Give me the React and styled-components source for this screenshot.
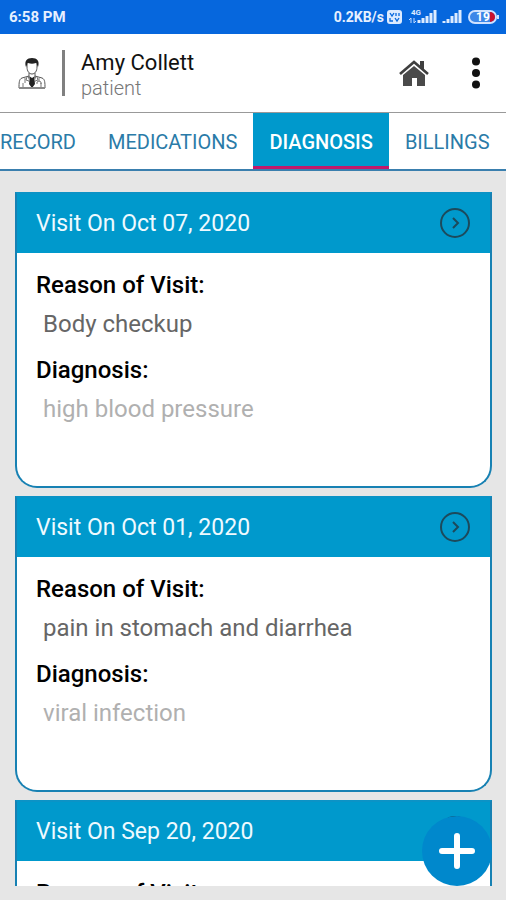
import styled, { createGlobalStyle } from "styled-components"

const visits = [
    { id: 1, date: "Oct 07, 2020", reason: "Body checkup", diagnosis: "high blood pressure" },
    { id: 2, date: "Oct 01, 2020", reason: "pain in stomach and diarrhea", diagnosis: "viral infection" },
    { id: 3, date: "Sep 20, 2020" },
]

const tabs = ["RECORD", "MEDICATIONS", "DIAGNOSIS", "BILLINGS"]

const StatusIcons = () => (
    <svg width="114" height="18" viewBox="0 0 114 18" aria-hidden="true">
        <rect x="1" y="2" width="15" height="14" rx="3" fill="#dcebff" />
        <path d="M4 5l2 3 2-3M10 5v3M13 5v3M4 10v3h3M9 10l2 3 2-3" stroke="#0667dd" strokeWidth="1.3" fill="none" />
        <text x="25" y="7" fontSize="8" fontWeight="700" fill="#dcebff">4G</text>
        <path d="M25 10v5M23 12l2-2M28 15v-5M30 13l-2 2" stroke="#c4dcff" strokeWidth="1" fill="none" />
        <path d="M33 15v-3M37 15v-5M41 15V8M45 15V5M49 15V2" stroke="#dcebff" strokeWidth="3" />
        <path d="M58 15v-2M62 15v-4M66 15V8M70 15V5M74 15V2" stroke="#dcebff" strokeWidth="3" />
        <rect x="83" y="3" width="27" height="12" rx="6" fill="#3c87e8" stroke="#cfe2ff" strokeWidth="2" />
        <path d="M104 4a5 5 0 0 1 0 10z" fill="#c8102e" />
        <path d="M112 7v4" stroke="#cfe2ff" strokeWidth="2" />
        <text x="90" y="13" fontSize="12" fontWeight="700" fill="#fff">19</text>
    </svg>
)

const DoctorIcon = () => (
    <svg width="30" height="34" viewBox="0 0 30 34" fill="none" stroke="#555" aria-hidden="true">
        <path d="M10 8v3c0 4 2 7 5 7s5-3 5-7V8" strokeWidth="1" fill="#fff" />
        <path d="M9 11c-2-6 1-9 6-9s8 3 6 9c-1-2-1-3-2-4-3 1-5 1-8 0-1 1-1 2-2 4z" fill="#222" stroke="none" />
        <path d="M12 17v3l-7 2c-3 1-3 5-3 10h26c0-5 0-9-3-10l-7-2v-3" strokeWidth="1" />
        <path d="M11 20l4 11 4-11M10 21l-1 3 3 1 3 6M20 21l1 3-3 1-3 6M6 27v5M24 27v5" strokeWidth="0.8" />
        <path d="M12 20l3 2 3-2-1 4 1 4-3 4-3-4 1-4z" fill="#222" stroke="none" />
        <path d="M22 22v3m-2 3v-2l2-1 2 1v2M8 22v5" strokeWidth="0.8" />
        <path d="M2 32h26" strokeWidth="2" stroke="#888" />
    </svg>
)

const HomeIcon = () => (
    <svg width="30" height="26" viewBox="0 0 30 26" aria-hidden="true">
        <path d="M15 6l11 9v11h-8v-8h-5v8H4V15z" fill="#4a4a4a" />
        <path d="M1 14L15 2l14 12" fill="none" stroke="#3f3f3f" strokeWidth="2.6" />
        <path d="M21 1h4v9l-4-4z" fill="#3f3f3f" />
    </svg>
)

const MoreIcon = () => (
    <svg width="10" height="32" viewBox="0 0 10 32" fill="#111" aria-hidden="true">
        <circle cx="5" cy="4.5" r="4" />
        <circle cx="5" cy="16" r="4" />
        <circle cx="5" cy="27.5" r="4" />
    </svg>
)

const Visit = ({ visit }) => {
    return (
        <Card>
            <CardHeader>
                <CardTitle>Visit On {visit.date}</CardTitle>
                <OpenButton type="button" aria-label={`Open visit on ${visit.date}`}>
                    <svg width="32" height="32" viewBox="0 0 32 32" fill="none" stroke="#1c4a5c" strokeWidth="2">
                        <circle cx="16" cy="15" r="14" />
                        <path d="M14 10l5 5-5 5" />
                    </svg>
                </OpenButton>
            </CardHeader>
            <Details>
                <Label>Reason of Visit:</Label>
                <Value>{visit.reason}</Value>
                <Label>Diagnosis:</Label>
                <Value $muted>{visit.diagnosis}</Value>
            </Details>
        </Card>
    )
}

const App = () => {
    return (
        <Screen>
            <GlobalStyle />
            <StatusBar>
                <span>6:58 PM</span>
                <StatusRight>
                    <span>0.2KB/s</span>
                    <StatusIcons />
                </StatusRight>
            </StatusBar>
            <Header>
                <DoctorIcon />
                <Divider />
                <Person>
                    <Name>Amy Collett</Name>
                    <Role>patient</Role>
                </Person>
                <Actions>
                    <IconButton type="button" aria-label="Home"><HomeIcon /></IconButton>
                    <IconButton type="button" aria-label="More options"><MoreIcon /></IconButton>
                </Actions>
            </Header>
            <Tabs>
                {tabs.map(tab => (
                    <Tab key={tab} type="button" $active={tab === "DIAGNOSIS"}>{tab}</Tab>
                ))}
            </Tabs>
            <Content>
                <List>
                    {visits.map(visit => <Visit key={visit.id} visit={visit} />)}
                </List>
                <AddButton type="button" aria-label="Add visit">
                    <svg width="38" height="38" viewBox="0 0 38 38" stroke="#fff" strokeWidth="6" strokeLinecap="round">
                        <path d="M19 4v30M4 19h30" />
                    </svg>
                </AddButton>
            </Content>
        </Screen>
    )
}

const GlobalStyle = createGlobalStyle`
    * {
        box-sizing: border-box;
    }

    body {
        margin: 0;
        font-family: Roboto, "Liberation Sans", sans-serif;
        background: #e6e6e6;
    }

    button {
        font-family: inherit;
        border: 0;
        padding: 0;
        background: none;
        cursor: pointer;
    }

    svg {
        display: block;
        flex-shrink: 0;
    }
`

const Screen = styled.div`
    height: 100vh;
    display: flex;
    flex-direction: column;
    overflow: hidden;
`

const StatusBar = styled.div`
    height: 34px;
    flex-shrink: 0;
    padding: 0 6px 0 9px;
    display: flex;
    align-items: center;
    justify-content: space-between;
    background: #0667dd;
    color: #e6f0ff;
    font-size: 15px;
    font-weight: 700;
`

const StatusRight = styled.div`
    display: flex;
    align-items: center;
    gap: 2px;
    font-size: 14px;
`

const Header = styled.header`
    height: 79px;
    flex-shrink: 0;
    padding: 0 25px 0 17px;
    display: flex;
    align-items: center;
    background: #fff;
    border-bottom: 1px solid #999;
`

const Divider = styled.div`
    width: 3px;
    height: 46px;
    margin: 0 16px 0 15px;
    background: #808080;
`

const Person = styled.div`
    flex: 1;
    padding-top: 4px;
`

const Name = styled.h1`
    margin: 0;
    font-size: 22px;
    line-height: 26px;
    font-weight: 400;
    color: #111;
`

const Role = styled.p`
    margin: 0;
    font-size: 20px;
    line-height: 24px;
    font-weight: 300;
    color: #777;
`

const Actions = styled.div`
    display: flex;
    align-items: center;
    gap: 42px;
`

const IconButton = styled.button`
    display: flex;
`

const Tabs = styled.nav`
    height: 58px;
    flex-shrink: 0;
    display: flex;
    overflow: hidden;
    background: #fff;
    border-bottom: 2px solid #3a7fae;
`

const Tab = styled.button`
    flex-shrink: 0;
    padding: 4px 16px 0;
    font-size: 20px;
    font-weight: ${props => props.$active ? 500 : 400};
    color: ${props => props.$active ? "#fff" : "#2a7ba8"};
    background: ${props => props.$active ? "#0099cc" : "#fff"};
    border-bottom: 3px solid ${props => props.$active ? "#c2186b" : "#fff"};

    &:first-child {
        padding-left: 0;
    }
`

const Content = styled.main`
    flex: 1;
    min-height: 0;
    padding: 21px 14px 14px 15px;
    display: flex;
    position: relative;
`

const List = styled.div`
    flex: 1;
    display: flex;
    flex-direction: column;
    gap: 8px;
    overflow: hidden;
`

const Card = styled.article`
    flex-shrink: 0;
    background: #fff;
    border: 2px solid #1781b3;
    border-top-color: #0b93c6;
    border-radius: 0 0 22px 22px;
`

const CardHeader = styled.div`
    height: 59px;
    padding: 0 19px;
    display: flex;
    align-items: center;
    justify-content: space-between;
    background: #0099cc;
`

const CardTitle = styled.h2`
    margin: 0;
    font-size: 23px;
    font-weight: 400;
    color: #eefaff;
`

const OpenButton = styled.button`
    display: flex;
`

const Details = styled.dl`
    margin: 0;
    padding: 12px 19px 51px;
`

const Label = styled.dt`
    font-size: 24px;
    line-height: 40px;
    font-weight: 500;
    color: #000;
`

const Value = styled.dd`
    margin: 0 0 7px 7px;
    font-size: 24px;
    line-height: 38px;
    font-weight: 400;
    color: ${props => props.$muted ? "#b0b0b0" : "#666"};
`

const AddButton = styled.button`
    position: absolute;
    right: 14px;
    bottom: 14px;
    width: 70px;
    height: 70px;
    border-radius: 50%;
    display: flex;
    align-items: center;
    justify-content: center;
    background: #0088cc;
`

export default App
